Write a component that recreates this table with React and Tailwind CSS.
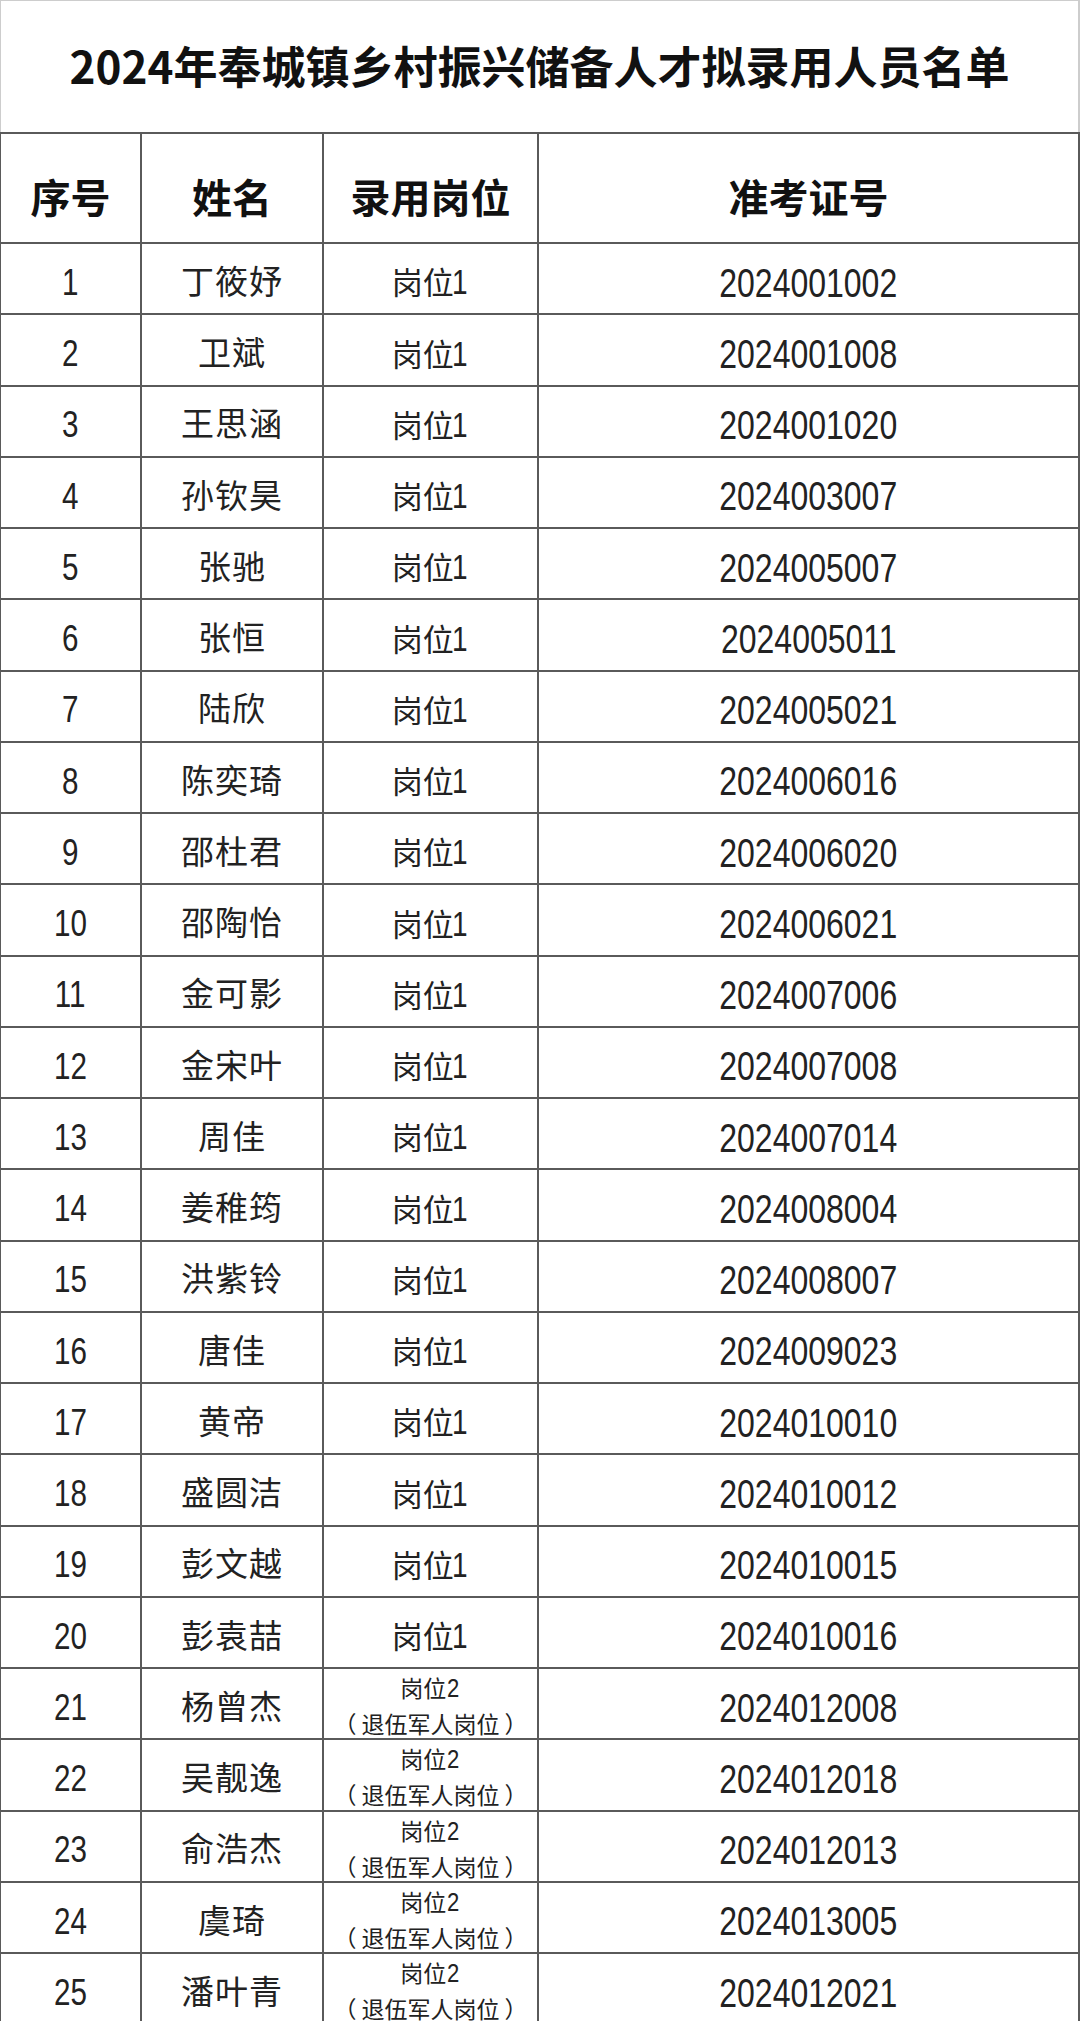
import React from "react";

const rows = [
  ["1", "丁筱妤", 1, "2024001002"],
  ["2", "卫斌", 1, "2024001008"],
  ["3", "王思涵", 1, "2024001020"],
  ["4", "孙钦昊", 1, "2024003007"],
  ["5", "张驰", 1, "2024005007"],
  ["6", "张恒", 1, "2024005011"],
  ["7", "陆欣", 1, "2024005021"],
  ["8", "陈奕琦", 1, "2024006016"],
  ["9", "邵杜君", 1, "2024006020"],
  ["10", "邵陶怡", 1, "2024006021"],
  ["11", "金可影", 1, "2024007006"],
  ["12", "金宋叶", 1, "2024007008"],
  ["13", "周佳", 1, "2024007014"],
  ["14", "姜稚筠", 1, "2024008004"],
  ["15", "洪紫铃", 1, "2024008007"],
  ["16", "唐佳", 1, "2024009023"],
  ["17", "黄帝", 1, "2024010010"],
  ["18", "盛圆洁", 1, "2024010012"],
  ["19", "彭文越", 1, "2024010015"],
  ["20", "彭袁喆", 1, "2024010016"],
  ["21", "杨曾杰", 2, "2024012008"],
  ["22", "吴靓逸", 2, "2024012018"],
  ["23", "俞浩杰", 2, "2024012013"],
  ["24", "虞琦", 2, "2024013005"],
  ["25", "潘叶青", 2, "2024012021"],
];

const cjk = "font-['Noto_Sans_CJK_SC',sans-serif]";
const latin = "font-['Liberation_Sans','Noto_Sans_CJK_SC',sans-serif]";

// narrow digits, like the condensed face in the scan
const Num = ({ children, size }) => (
  <span className={`${latin} ${size} inline-block scale-x-[0.8]`}>{children}</span>
);

const Post = ({ level }) => {
  if (level === 1) {
    return (
      <span className={`${cjk} text-[31px] text-[#222] pt-2 flex items-baseline`}>
        岗位<span className={`${latin} text-[35px] inline-block scale-x-[0.8] -ml-1`}>1</span>
      </span>
    );
  }
  return (
    <div className={`${cjk} text-[23px] leading-[35px] text-[#222] text-center pt-1`}>
      <div className="flex items-baseline justify-center">
        岗位<span className={`${latin} text-[26px] inline-block scale-x-[0.85]`}>2</span>
      </div>
      <div className="flex justify-center whitespace-nowrap">
        <span className="mr-[5px]">（</span>
        <span>退伍军人岗位</span>
        <span className="ml-[5px]">）</span>
      </div>
    </div>
  );
};

export default function App() {
  return (
    <div className="w-[1080px] h-[2021px] overflow-hidden bg-white">
      {/* Title */}
      <div className="h-[132px] border-t border-l border-r-2 border-[#cdcdcd] flex items-center justify-center">
        <h1 className={`${cjk} font-bold text-[44px] text-[#111] pb-1`}>
          2024年奉城镇乡村振兴储备人才拟录用人员名单
        </h1>
      </div>

      {/* Header */}
      <div className={`${cjk} flex h-[110px] border-t-2 border-l border-[#5a5a5a] font-bold text-[40px] text-[#111]`}>
        <div className="w-[141px] border-r-2 border-[#5a5a5a] flex items-center justify-center pt-4">序号</div>
        <div className="w-[182px] border-r-2 border-[#5a5a5a] flex items-center justify-center pt-4">姓名</div>
        <div className="w-[215px] border-r-2 border-[#5a5a5a] flex items-center justify-center pt-4">录用岗位</div>
        <div className="flex-1 border-r-2 border-[#5a5a5a] flex items-center justify-center pt-4">准考证号</div>
      </div>

      {/* Rows */}
      {rows.map(([no, name, level, id]) => (
        <div key={no} className="flex h-[71.25px] border-t-2 border-l border-[#5a5a5a] text-[#222]">
          <div className="w-[141px] border-r-2 border-[#5a5a5a] flex items-center justify-center pt-2">
            <Num size="text-[37px]">{no}</Num>
          </div>
          <div className={`${cjk} w-[182px] border-r-2 border-[#5a5a5a] flex items-center justify-center text-[33px] tracking-[1px] pt-1`}>
            {name}
          </div>
          <div className="w-[215px] border-r-2 border-[#5a5a5a] flex items-center justify-center">
            <Post level={level} />
          </div>
          <div className="flex-1 border-r-2 border-[#5a5a5a] flex items-center justify-center pt-2">
            <Num size="text-[40px]">{id}</Num>
          </div>
        </div>
      ))}
    </div>
  );
}
